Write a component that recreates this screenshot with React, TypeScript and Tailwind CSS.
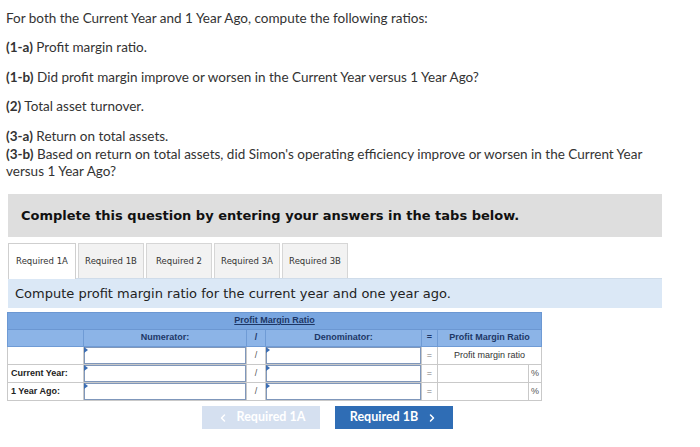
import React from 'react'
import { ChevronLeft, ChevronRight } from 'lucide-react'

const body = { fontFamily: 'Lato, "Open Sans", sans-serif' }
const verdana = { fontFamily: '"DejaVu Sans", Verdana, sans-serif' }
const arial = { fontFamily: '"Liberation Sans", Arial, sans-serif' }

function Marker() {
  return (
    <span className="absolute left-[-1px] top-[-1px] h-0 w-0 border-y-[3px] border-l-[4px] border-y-transparent border-l-[#3b6db3]" />
  )
}

function InputCell() {
  return (
    <td className="h-[17px] border border-[#c9c9c9] p-0">
      <div className="relative h-[17px] border border-[#7f97bb] bg-white">
        <Marker />
      </div>
    </td>
  )
}

function SlashCell() {
  return <td className="border border-[#c9c9c9] text-center text-[#555]">/</td>
}

function EqCell() {
  return <td className="border border-[#c9c9c9] text-center text-[#777]">=</td>
}

function YearRow({ label }: { label: string }) {
  return (
    <tr className="h-[17px]">
      <td className="border border-[#c9c9c9] pl-[3px] font-bold text-[#222]">{label}</td>
      <InputCell />
      <SlashCell />
      <InputCell />
      <EqCell />
      <td className="border border-[#c9c9c9] p-0">
        <div className="flex h-[17px]">
          <div className="flex-1 border-r border-[#c9c9c9]" />
          <div className="w-[12px] text-center leading-[17px] text-[#555]">%</div>
        </div>
      </td>
    </tr>
  )
}

const tabs = ['Required 1A', 'Required 1B', 'Required 2', 'Required 3A', 'Required 3B']

export default function App() {
  return (
    <div className="h-[447px] w-[700px] overflow-hidden bg-white">
      <div className="pl-[6px] pr-[30px] pt-[10px] text-[13.5px] leading-[17px] text-[#333]" style={body}>
        <p>For both the Current Year and 1 Year Ago, compute the following ratios:</p>
        <p className="mt-[12px]">
          <b>(1-a)</b> Profit margin ratio.
        </p>
        <p className="mt-[13px]">
          <b>(1-b)</b> Did profit margin improve or worsen in the Current Year versus 1 Year Ago?
        </p>
        <p className="mt-[12px]">
          <b>(2)</b> Total asset turnover.
        </p>
        <p className="mt-[13px]">
          <b>(3-a)</b> Return on total assets.
        </p>
        <p className="mt-[1px] leading-[16.5px]">
          <b>(3-b)</b> Based on return on total assets, did Simon's operating efficiency improve or worsen in the Current Year versus 1 Year Ago?
        </p>
      </div>

      <div className="ml-[8px] mt-[15px] w-[654px]">
        <div className="flex h-[43px] items-center bg-[#dedede] pl-[13px] text-[13px] font-bold text-[#111]" style={verdana}>
          Complete this question by entering your answers in the tabs below.
        </div>

        <div className="mt-[6px] flex gap-[2px]" style={verdana}>
          {tabs.map((t, i) => (
            <div
              key={t}
              className={
                i === 0
                  ? 'relative -mb-px flex h-[36px] w-[68px] items-center justify-center border border-b-0 border-[#cfcfcf] bg-white text-[8.5px] text-[#333]'
                  : 'flex h-[35px] w-[66px] items-center justify-center border border-b-0 border-[#d6d6d6] bg-[#f2f2f2] text-[8.5px] text-[#333]'
              }
            >
              {t}
            </div>
          ))}
        </div>

        <div className="flex h-[30px] items-center border-t border-[#cfdcea] bg-[#dbe8f6] pl-[7px] text-[13px] text-[#222]" style={verdana}>
          Compute profit margin ratio for the current year and one year ago.
        </div>
      </div>

      <table className="ml-[7px] mt-[4px] w-[534px] table-fixed border-collapse text-[9px]" style={arial}>
        <colgroup>
          <col className="w-[76px]" />
          <col className="w-[163px]" />
          <col className="w-[19px]" />
          <col className="w-[156px]" />
          <col className="w-[16px]" />
          <col className="w-[104px]" />
        </colgroup>
        <tbody>
          <tr className="h-[17px] bg-[#79a6e0]">
            <td colSpan={6} className="border border-[#6b97d2] text-center font-bold text-[#1d3766] underline">
              Profit Margin Ratio
            </td>
          </tr>
          <tr className="h-[17px] bg-[#8cb4e7] font-bold text-[#1d3766]">
            <td className="border border-[#6f9bd5]" />
            <td className="border border-[#6f9bd5] text-center">Numerator:</td>
            <td className="border border-[#6f9bd5] text-center">/</td>
            <td className="border border-[#6f9bd5] text-center">Denominator:</td>
            <td className="border border-[#6f9bd5] text-center">=</td>
            <td className="border border-[#6f9bd5] text-center">Profit Margin Ratio</td>
          </tr>
          <tr className="h-[17px]">
            <td className="border border-[#c9c9c9]" />
            <InputCell />
            <SlashCell />
            <InputCell />
            <EqCell />
            <td className="border border-[#c9c9c9] text-center text-[#333]">Profit margin ratio</td>
          </tr>
          <YearRow label="Current Year:" />
          <YearRow label="1 Year Ago:" />
        </tbody>
      </table>

      <div className="ml-[202px] mt-[5px] flex gap-[15px]" style={body}>
        <div className="flex h-[23px] w-[118px] items-center justify-center gap-[8px] bg-[#d5e0f0] text-[12.5px] font-bold text-white">
          <ChevronLeft size={12} strokeWidth={3} />
          <span>Required 1A</span>
        </div>
        <div className="flex h-[23px] w-[118px] items-center justify-center gap-[8px] bg-[#2f6db5] text-[12.5px] font-bold text-white">
          <span>Required 1B</span>
          <ChevronRight size={12} strokeWidth={3} />
        </div>
      </div>
    </div>
  )
}
